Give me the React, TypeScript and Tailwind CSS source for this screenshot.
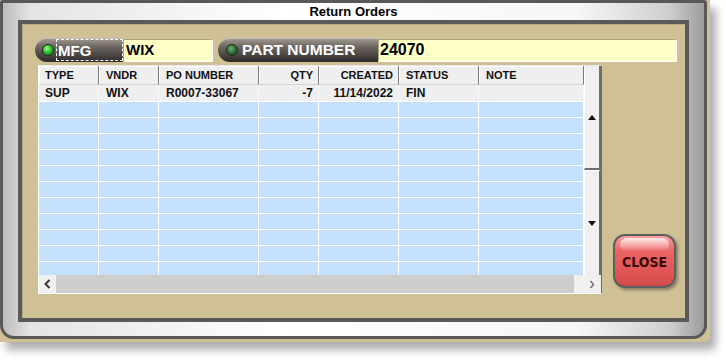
const columns = [
  { label: "TYPE", cell: "w-[60px] pl-[6px] justify-start" },
  { label: "VNDR", cell: "w-[60px] pl-[7px] justify-start" },
  { label: "PO NUMBER", cell: "w-[100px] pl-[7px] justify-start" },
  { label: "QTY", cell: "w-[60px] pr-[5px] justify-end" },
  { label: "CREATED", cell: "w-[80px] pr-[5px] justify-end" },
  { label: "STATUS", cell: "w-[80px] pl-[7px] justify-start" },
  { label: "NOTE", cell: "w-[105px] pl-[7px] justify-start" },
];

const firstRow = ["SUP", "WIX", "R0007-33067", "-7", "11/14/2022", "FIN", ""];
const emptyRows = Array.from({ length: 11 }, (_, i) => i);

function Led({ on }: { on: boolean }) {
  return (
    <span
      className={
        on
          ? "w-[12px] h-[12px] rounded-full shrink-0 border border-[#1c2a1c] bg-[radial-gradient(circle_at_40%_35%,#9cff8c_0%,#30c030_45%,#137a13_100%)]"
          : "w-[12px] h-[12px] rounded-full shrink-0 border border-[#1c2a1c] bg-[radial-gradient(circle_at_40%_35%,#6fae78_0%,#2f6f3a_50%,#173d1f_100%)]"
      }
    />
  );
}

const pill =
  "h-[24px] flex items-center rounded-l-full rounded-r-[5px] bg-[linear-gradient(180deg,#a49e96_0%,#6e6862_35%,#4c4743_70%,#2e2b29_100%)] shadow-[inset_0_1px_0_rgba(255,255,255,0.35)] text-white font-bold";

export default function App() {
  return (
    <div className="w-[726px] h-[363px] bg-white font-['Liberation_Sans',Arial,sans-serif] overflow-hidden">
      <div className="w-[710px] h-[342px] bg-[#cfc195] rounded-br-[6px] shadow-[6px_8px_9px_rgba(0,0,0,0.32)]">
        <div className="w-[707px] h-[339px] border-[3px] border-[#585858] rounded-t-[3px] rounded-b-[14px] flex flex-col px-[15px] pb-[14px] bg-[linear-gradient(90deg,#bcbcbc_0%,#e4e4e4_4%,#ffffff_40%,#f6f6f6_82%,#cfcfcf_95%,#9c9c9c_100%)]">
          <div className="h-[17px] flex items-center justify-center text-[13px] font-bold text-black pt-[1px]">
            Return Orders
          </div>

          <div className="flex-1 border-[4px] border-[#5a5a5a] bg-[#cfc195] shadow-[inset_1px_1px_0_#b7aa80] pt-[14px] pl-[13px] flex flex-col">
            <div className="flex items-center h-[24px]">
              <div className={`${pill} w-[88px] pl-[7px] gap-[2px]`}>
                <Led on />
                <span className="h-[22px] flex-1 flex items-center border border-dashed border-white text-[15px] leading-none pl-[1px]">
                  MFG
                </span>
              </div>
              <div className="w-[90px] h-[23px] bg-[#ffffc6] border-t border-l border-[#a9a27f] border-r border-b border-r-white border-b-white flex items-center pl-[2px] text-[15px] font-bold text-black">
                WIX
              </div>
              <div className={`${pill} w-[160px] ml-[5px] pl-[8px] gap-[4px] text-[15.5px]`}>
                <Led on={false} />
                <span className="leading-none">PART NUMBER</span>
              </div>
              <div className="w-[299px] h-[23px] bg-[#ffffc6] border-t border-l border-[#a9a27f] border-r border-b border-r-white border-b-white flex items-center pl-[1px] text-[16px] font-bold text-black">
                24070
              </div>
            </div>

            <div className="flex items-start mt-[3px] ml-[3px]">
              <div className="w-[564px] h-[229px] border-l border-b border-white border-t border-t-[#e8e8e8] border-r border-r-[#6a6a6a] bg-[#f0f0f0] flex flex-col">
                <div className="flex h-[209px]">
                  <div className="w-[545px] overflow-hidden flex flex-col">
                    <div className="flex h-[19px] shrink-0 bg-[#efefef] text-[11px] font-bold text-[#111]">
                      {columns.map((c) => (
                        <div
                          key={c.label}
                          className={`${c.cell} h-full flex items-center border-r border-[#7a7a7a] shadow-[inset_1px_1px_0_#ffffff] border-b border-b-[#d4d4d4]`}
                        >
                          {c.label}
                        </div>
                      ))}
                    </div>
                    <div className="flex h-[16px] shrink-0 bg-[#efefef] text-[12px] font-bold text-[#111]">
                      {columns.map((c, i) => (
                        <div key={c.label} className={`${c.cell} h-full flex items-center border-r border-[#f7f7f7]`}>
                          {firstRow[i]}
                        </div>
                      ))}
                    </div>
                    {emptyRows.map((r) => (
                      <div key={r} className="flex h-[16px] shrink-0 bg-[#c4e0fb] border-t border-white">
                        {columns.map((c) => (
                          <div key={c.label} className={`${c.cell} h-full border-r border-white`} />
                        ))}
                      </div>
                    ))}
                  </div>

                  <div className="w-[17px] flex flex-col bg-[#f0f0f0]">
                    <div className="h-[104px] border-r-2 border-b-2 border-[#6e6e6e] border-l border-l-white flex items-center justify-center">
                      <svg width="8" height="5" viewBox="0 0 8 5">
                        <path d="M0 5 L4 0 L8 5 Z" fill="#111" />
                      </svg>
                    </div>
                    <div className="flex-1 border-r-2 border-[#6e6e6e] border-l border-l-white border-t border-t-white flex items-center justify-center">
                      <svg width="8" height="5" viewBox="0 0 8 5">
                        <path d="M0 0 L8 0 L4 5 Z" fill="#111" />
                      </svg>
                    </div>
                  </div>
                </div>

                <div className="flex h-[18px]">
                  <div className="w-[17px] bg-[#f0f0f0] flex items-center justify-center">
                    <svg width="7" height="10" viewBox="0 0 7 10">
                      <path d="M5.5 1 L1.5 5 L5.5 9" fill="none" stroke="#3a3a3a" strokeWidth="2" />
                    </svg>
                  </div>
                  <div className="w-[518px] bg-[#cdcdcd]" />
                  <div className="flex-1 bg-[#f0f0f0] flex items-center justify-end pr-[6px]">
                    <svg width="6" height="9" viewBox="0 0 6 9">
                      <path d="M1.5 1 L4.5 4.5 L1.5 8" fill="none" stroke="#707070" strokeWidth="1.5" />
                    </svg>
                  </div>
                </div>
              </div>

              <button
                type="button"
                className="relative ml-[11px] mt-[169px] w-[63px] h-[54px] rounded-[12px] border-2 border-[#5e5e5e] bg-[linear-gradient(180deg,#f7a0a0_0%,#ec6464_30%,#e05656_70%,#d24c4c_100%)] shadow-[2px_2px_3px_rgba(0,0,0,0.35)] flex items-center justify-center"
              >
                <span className="absolute left-[5px] right-[5px] top-[2px] h-[13px] rounded-[8px] bg-[linear-gradient(180deg,rgba(255,255,255,0.75),rgba(255,255,255,0.05))]" />
                <span className="relative font-['DejaVu_Sans_Condensed','DejaVu_Sans',sans-serif] font-bold text-[14px] text-[#3a0808] mt-[3px]">
                  CLOSE
                </span>
              </button>
            </div>
          </div>
        </div>
      </div>
    </div>
  );
}
